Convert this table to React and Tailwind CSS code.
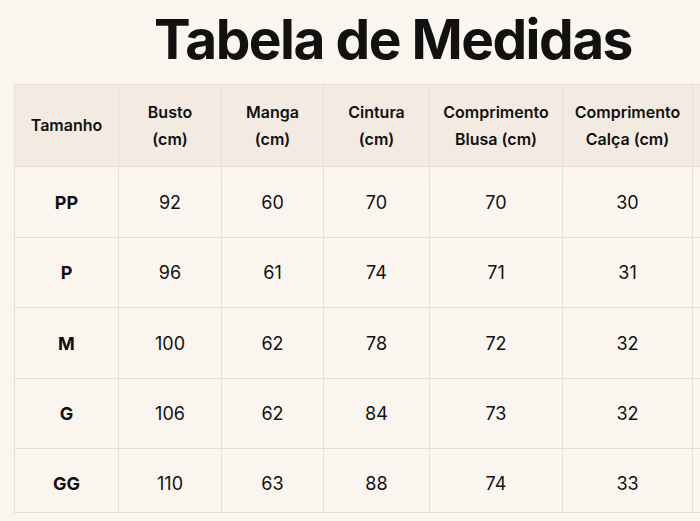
const headers = [
  ["Tamanho"],
  ["Busto", "(cm)"],
  ["Manga", "(cm)"],
  ["Cintura", "(cm)"],
  ["Comprimento", "Blusa (cm)"],
  ["Comprimento", "Calça (cm)"],
  [""],
];

const rows = [
  ["PP", "92", "60", "70", "70", "30", ""],
  ["P", "96", "61", "74", "71", "31", ""],
  ["M", "100", "62", "78", "72", "32", ""],
  ["G", "106", "62", "84", "73", "32", ""],
  ["GG", "110", "63", "88", "74", "33", ""],
];

// row heights as measured on the picture
const rowHeights = ["h-[71px]", "h-[70px]", "h-[71px]", "h-[70px]", "h-[64px] pt-[5px]"];

function App() {
  return (
    <div
      className="w-[700px] h-[521px] overflow-hidden bg-[#faf5ef] text-[#111]"
      style={{ fontFamily: "Inter, 'Noto Sans', sans-serif" }}
    >
      <div className="w-[758px] ml-[14px]">
        <h1 className="pt-[12px] h-[70px] mb-[14px] text-center text-[55px] leading-none font-bold tracking-[-1.5px]">
          Tabela de Medidas
        </h1>

        <div className="grid grid-cols-[104px_103px_102px_106px_133px_130px_80px] border-l border-t border-[#e6ddd4]">
          {headers.map((h, i) => (
            <div
              key={i}
              className="h-[82px] flex flex-col items-center justify-center bg-[#f3ebe2] border-r border-b border-[#e6ddd4] text-[16px] leading-[27px] font-semibold"
            >
              {h.map((line, j) => (
                <span key={j}>{line}</span>
              ))}
            </div>
          ))}

          {rows.map((row, r) =>
            row.map((cell, c) => (
              <div
                key={r + "-" + c}
                className={
                  rowHeights[r] +
                  " flex items-center justify-center border-r border-b border-[#e6ddd4] text-[18px] " +
                  (c === 0 ? "font-bold" : "font-normal")
                }
              >
                {cell}
              </div>
            ))
          )}
        </div>
      </div>
    </div>
  );
}

export default App;
